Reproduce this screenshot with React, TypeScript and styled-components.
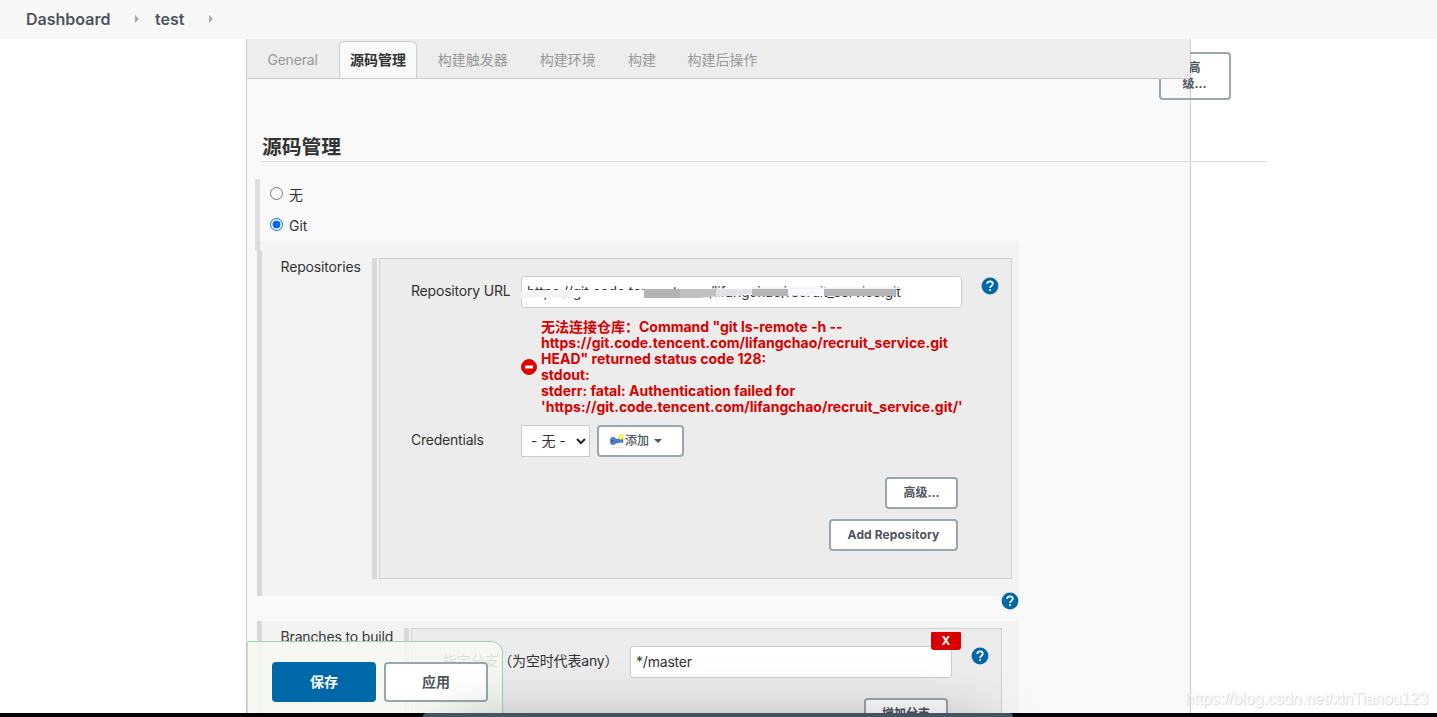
import React from "react";
import styled, { createGlobalStyle } from "styled-components";

const Global = createGlobalStyle`
  * { box-sizing: border-box; }
  body {
    margin: 0;
    background: #fff;
    color: #333;
    font: 14px/16px Inter, "Noto Sans CJK SC", sans-serif;
  }
`;

const Page = styled.div`
  position: relative;
  width: 1437px;
  height: 717px;
  overflow: hidden;
`;

const Text = styled.span<{ $track?: number }>`
  white-space: nowrap;
  letter-spacing: ${(p) => p.$track ?? 0}px;
`;

const Breadcrumbs = styled.header`
  display: flex;
  align-items: center;
  height: 39px;
  padding: 0 0 1px 26px;
  background: #f8f8f8;
  color: #4d545d;
  font-size: 16px;
  font-weight: 600;
`;

const Crumb = styled(Text)<{ $width: number }>`
  width: ${(p) => p.$width}px;
`;

const Arrow = styled.i<{ $gap: number }>`
  width: 0;
  margin-right: ${(p) => p.$gap}px;
  border: 4px solid transparent;
  border-left-color: #aaa;
  border-right-width: 0;
`;

const Panel = styled.main`
  display: flex;
  flex-direction: column;
  width: 945px;
  height: 674px;
  margin-left: 246px;
  background: #f9f9f9;
  border: solid #ccc;
  border-width: 0 1px;
`;

const Tabs = styled.nav`
  position: relative;
  z-index: 2;
  display: flex;
  align-items: flex-end;
  flex: none;
  height: 40px;
  padding-left: 10px;
  background: #ededed;
  border-bottom: 1px solid #ccc;
  color: #999;
`;

const Tab = styled.div<{ $active?: boolean; $width: number }>`
  display: flex;
  align-items: center;
  justify-content: center;
  width: ${(p) => p.$width}px;
  height: 37px;
  border: ${(p) => (p.$active ? "1px solid #ccc" : "0")};
  border-bottom: 0;
  border-radius: 5px 5px 0 0;
  background: ${(p) => (p.$active ? "#f9f9f9" : "transparent")};
  color: ${(p) => (p.$active ? "#333" : "inherit")};
  font-weight: ${(p) => (p.$active ? 700 : 400)};
`;

const TabGap = styled.i<{ $width: number }>`
  width: ${(p) => p.$width}px;
`;

const Heading = styled.h1`
  flex: none;
  width: 1005px;
  height: 83px;
  margin: 0 0 17px 15px;
  padding-top: 56px;
  border-bottom: 1px solid #ddd;
  font-size: 19.800px;
  line-height: 24px;
  font-weight: 700;
`;

const RadioGroup = styled.div`
  flex: none;
  width: 400px;
  height: 72px;
  margin-left: 8px;
  border-left: 5px solid #e0e0e0;
`;

const RadioRow = styled.label`
  display: flex;
  gap: 6px;
  height: 31px;
  padding: 8px 0 0 10px;
`;

const Radio = styled.span<{ $on?: boolean }>`
  width: 13px;
  height: 13px;
  border: 1px solid ${(p) => (p.$on ? "#0068ff" : "#767676")};
  border-radius: 50%;
  background: ${(p) => (p.$on ? "radial-gradient(circle, #0068ff 3.6px, #fff 4.3px)" : "#fff")};
`;

const Block = styled.section<{ $height: number; $lift?: number }>`
  display: flex;
  flex: none;
  width: 762px;
  height: ${(p) => p.$height}px;
  margin: ${(p) => -(p.$lift ?? 0)}px 0 0 10px;
  background: rgba(0, 0, 0, 0.025);
`;

const Bar = styled.i<{ $top: number; $bottom?: number }>`
  flex: none;
  width: 5px;
  margin: ${(p) => p.$top}px 0 ${(p) => p.$bottom ?? 0}px;
  background: #d9d9d9;
`;

const BlockLabel = styled.div<{ $width: number; $top: number }>`
  flex: none;
  width: ${(p) => p.$width}px;
  padding: ${(p) => p.$top}px 0 0 18.500px;
`;

const Card = styled.div<{ $width: number; $top: number; $height: number }>`
  display: flex;
  flex-direction: column;
  flex: none;
  width: ${(p) => p.$width}px;
  height: ${(p) => p.$height}px;
  margin: ${(p) => p.$top}px 0 0 2px;
  background: #ececec;
  border: 1px solid #d0d0d0;
`;

const Field = styled.div<{ $top: number; $left: number }>`
  display: flex;
  align-items: flex-start;
  flex: none;
  margin-top: ${(p) => p.$top}px;
  padding-left: ${(p) => p.$left}px;
`;

const FieldLabel = styled.div<{ $width: number }>`
  flex: none;
  width: ${(p) => p.$width}px;
  padding-top: 7px;
`;

const Input = styled.div<{ $width: number }>`
  position: relative;
  display: flex;
  align-items: center;
  flex: none;
  width: ${(p) => p.$width}px;
  height: 32px;
  padding-left: 5px;
  background: #fff;
  border: 1px solid #ccc;
  border-radius: 3px;
`;

const Smear = styled.svg`
  position: absolute;
  left: -1px;
  top: -1px;
`;

const HelpSvg = styled.svg<{ $left: number; $top: number }>`
  display: block;
  flex: none;
  margin: ${(p) => p.$top}px 0 0 ${(p) => p.$left}px;
`;

const ErrorRow = styled.div`
  display: flex;
  align-items: center;
  flex: none;
  gap: 4px;
  height: 98px;
  margin-top: 10px;
  padding-left: 141px;
  color: #d90000;
  font-weight: 700;
`;

const ErrorLines = styled.div`
  display: flex;
  flex-direction: column;
`;

const Select = styled.div`
  display: flex;
  align-items: center;
  gap: 10px;
  width: 69px;
  height: 32px;
  padding-left: 9px;
  background: #fff;
  border: 1px solid #ccc;
`;

const Button = styled.div<{ $width: number; $height?: number }>`
  display: flex;
  align-items: center;
  justify-content: center;
  flex: none;
  width: ${(p) => p.$width}px;
  height: ${(p) => p.$height ?? 32}px;
  background: #fff;
  border: 2px solid #98a6b0;
  border-radius: 4px;
  color: #4d545d;
  font-size: 12px;
  font-weight: 700;
  text-align: center;
`;

const AddButton = styled(Button)`
  justify-content: flex-start;
  margin-left: 7px;
  padding-left: 10px;
  font-weight: 500;
`;

const Caret = styled.i`
  margin-left: 5px;
  border: 4px solid transparent;
  border-top-color: #4d545d;
  border-bottom-width: 0;
`;

const Actions = styled.div`
  display: flex;
  flex-direction: column;
  align-items: flex-end;
  gap: 10px;
  margin: 20px 53px 0 0;
`;

const HelpRow = styled.div`
  display: flex;
  align-items: flex-start;
  flex: none;
  height: 25px;
`;

const FloatingButton = styled(Button)`
  position: absolute;
  z-index: 1;
  left: 1159px;
  top: 52px;
  padding-right: 1px;
  background: transparent;
`;

const PanelEdge = styled.div`
  position: absolute;
  left: 1191px;
  top: 54px;
  width: 38px;
  height: 44px;
  background: #fff;
`;

const DeleteButton = styled.div`
  position: absolute;
  right: -10px;
  top: -15px;
  width: 30px;
  height: 18px;
  background: #d90000;
  border-radius: 1px 1px 3px 3px;
  color: #fff;
  font-size: 12px;
  line-height: 18px;
  font-weight: 700;
  text-align: center;
`;

const SaveBar = styled.footer`
  position: absolute;
  z-index: 3;
  left: 247px;
  top: 641px;
  display: flex;
  gap: 8px;
  width: 256px;
  height: 90px;
  padding: 20px 0 0 24px;
  background: rgba(245, 249, 240, 0.87);
  border: 1px solid #9fd0b8;
  border-left-color: #c4dccf;
  border-radius: 0 12px 0 0;
`;

const SaveButton = styled(Button)<{ $primary?: boolean }>`
  font-size: 14px;
  background: ${(p) => (p.$primary ? "#0068a8" : "#fff")};
  border-color: ${(p) => (p.$primary ? "#0068a8" : "#98a6b0")};
  color: ${(p) => (p.$primary ? "#fff" : "#4d545d")};
`;

const DockShade = styled.div`
  position: absolute;
  z-index: 4;
  left: 0;
  top: 600px;
  width: 1437px;
  height: 113px;
  overflow: hidden;
  &::after {
    content: "";
    position: absolute;
    left: 455px;
    top: 131px;
    width: 526px;
    height: 60px;
    box-shadow: 0 0 64px rgba(0, 0, 0, 0.38);
  }
`;

const Screen = styled.div`
  position: absolute;
  z-index: 5;
  left: 0;
  top: 713px;
  width: 1437px;
  height: 4px;
  background: #020307;
`;

const Dock = styled.div`
  width: 590px;
  height: 4px;
  margin-left: 423px;
  background: #455463;
  border-radius: 4px 4px 0 0;
`;

const Watermark = styled.div`
  position: absolute;
  z-index: 6;
  left: 1185px;
  top: 690px;
  color: #fff;
  font: 16px/18px "Liberation Sans", sans-serif;
  white-space: nowrap;
  text-shadow: 1px 1px 1px #d4d4d4, 0 0 1px #ddd;
`;

const Help = ({ left = 0, top = 1 }: { left?: number; top?: number }) => (
  <HelpSvg $left={left} $top={top} width="18" height="18" viewBox="0 0 18 18">
    <circle cx="9" cy="9" r="8.4" fill="#0068a8" />
    <path d="M6.2 7C6.2 5.2 7.4 4.3 9 4.3s2.8 1 2.8 2.500C11.800 8.800 9.100 8.700 9.100 11" fill="none" stroke="#fff" strokeWidth="1.7" />
    <rect x="8.200" y="12.200" width="1.800" height="1.800" fill="#fff" />
  </HelpSvg>
);

const tabs = [
  { name: "General", width: 71, track: -0.2 },
  { name: "源码管理", width: 78, active: true, gap: 11 },
  { name: "构建触发器", width: 111.5 },
  { name: "构建环境", width: 78.5 },
  { name: "构建", width: 70 },
  { name: "构建后操作", width: 91 },
];

const errors = [
  '无法连接仓库：Command "git ls-remote -h --',
  "https://git.code.tencent.com/lifangchao/recruit_service.git",
  'HEAD" returned status code 128:',
  "stdout:",
  "stderr: fatal: Authentication failed for",
  "'https://git.code.tencent.com/lifangchao/recruit_service.git/'",
];

export default function App() {
  return (
    <Page>
      <Global />
      <Breadcrumbs>
        <Crumb $width={109}>Dashboard</Crumb>
        <Arrow $gap={16} />
        <Crumb $width={54}>test</Crumb>
        <Arrow $gap={0} />
      </Breadcrumbs>
      <Panel>
        <Tabs>
          {tabs.map((t) => (
            <React.Fragment key={t.name}>
              {t.gap && <TabGap $width={t.gap} />}
              <Tab $width={t.width} $active={t.active}><Text $track={t.track}>{t.name}</Text></Tab>
            </React.Fragment>
          ))}
        </Tabs>
        <Heading>源码管理</Heading>
        <RadioGroup>
          <RadioRow><Radio /><Text>无</Text></RadioRow>
          <RadioRow><Radio $on /><Text>Git</Text></RadioRow>
        </RadioGroup>
        <Block $height={355} $lift={10}>
          <Bar $top={10} />
          <BlockLabel $width={110} $top={18}><Text $track={-0.15}>Repositories</Text></BlockLabel>
          <Bar $top={17} $bottom={17} />
          <Card $width={633} $top={17} $height={321}>
            <Field $top={17} $left={31}>
              <FieldLabel $width={110}><Text $track={-0.19}>Repository URL</Text></FieldLabel>
              <Input $width={441}>
                <Text $track={-0.19}>https://git.code.tencent.com/lifangchao/recruit_service.git</Text>
                <Smear width="390" height="32" viewBox="0 0 390 32">
                  <path d="M2 14L60 14L124 14L180 12.500L240 12L374 12L374 20L300 20L231 19L180 21L124 22.500L60 21L2 22Z" fill="#fff" />
                  <path d="M0 16L16 14L51 15V22L16 21L0 23Z" fill="#f3f4f6" />
                  <path d="M123 13H159V22H123Z" fill="#b3b3b3" />
                  <path d="M159 13H195V20L178 22H159Z" fill="#c0c0c1" />
                  <path d="M195 13H231V18L195 21Z" fill="#e0e2e5" />
                  <path d="M231 12.500H267V20H231Z" fill="#b4b4b5" />
                  <path d="M267 12.500H303V19H267Z" fill="#f7f9fc" />
                  <path d="M303 13H374V20H303Z" fill="#b3b4b5" />
                  <path d="M231 11.500H384L386 13H231Z" fill="#f0f2f3" />
                </Smear>
              </Input>
              <Help left={19} />
            </Field>
            <ErrorRow>
              <svg width="16" height="16" viewBox="0 0 16 16">
                <circle cx="8" cy="8" r="7.500" fill="#e60000" stroke="#b81414" />
                <rect x="4" y="6.500" width="8" height="3" fill="#fff" />
              </svg>
              <ErrorLines>
                {errors.map((line) => <Text key={line}>{line}</Text>)}
              </ErrorLines>
            </ErrorRow>
            <Field $top={9} $left={31}>
              <FieldLabel $width={110}><Text $track={-0.22}>Credentials</Text></FieldLabel>
              <Select>
                <Text>- 无 -</Text>
                <svg width="10" height="7" viewBox="0 0 10 7"><path d="M1 1L5 5L9 1" fill="none" stroke="#222" strokeWidth="2" /></svg>
              </Select>
              <AddButton $width={87}>
                <svg width="16" height="16" viewBox="0 0 16 16">
                  <ellipse cx="8" cy="14.500" rx="6" ry="0.700" fill="#e4e4e4" />
                  <path d="M1.500 5.500C3 3.500 6 4.300 7 6H14V9.500H12L11 9L10 10H7C6 12 3 12.200 1.500 10.500Z" fill="#4a7fc6" stroke="#3d6eb4" strokeWidth=".5" />
                  <circle cx="3.200" cy="8" r="0.900" fill="#284b80" />
                  <circle cx="12" cy="4" r="1.800" fill="#fff" stroke="#f6f000" strokeWidth="1.600" />
                </svg>
                添加
                <Caret />
              </AddButton>
            </Field>
            <Actions>
              <Button $width={73}>高级...</Button>
              <Button $width={129}><Text $track={0.1}>Add Repository</Text></Button>
            </Actions>
          </Card>
        </Block>
        <HelpRow><Help left={754} top={-4} /></HelpRow>
        <Block $height={92}>
          <Bar $top={0} />
          <BlockLabel $width={142} $top={8}><Text $track={-0.15}>Branches to build</Text></BlockLabel>
          <Bar $top={7} />
          <Card $width={591} $top={7} $height={100}>
            <Field $top={17} $left={31}>
              <FieldLabel $width={187}><Text $track={-0.18}>指定分支（为空时代表any）</Text></FieldLabel>
              <Input $width={322}>
                <Text $track={-0.2}>*/master</Text>
                <DeleteButton>X</DeleteButton>
              </Input>
              <Help left={19} />
            </Field>
            <Actions>
              <Button $width={84}>增加分支</Button>
            </Actions>
          </Card>
        </Block>
      </Panel>
      <PanelEdge />
      <FloatingButton $width={72} $height={48}>高<br />级...</FloatingButton>
      <SaveBar>
        <SaveButton $width={104} $height={40} $primary>保存</SaveButton>
        <SaveButton $width={104} $height={40}>应用</SaveButton>
      </SaveBar>
      <DockShade />
      <Screen><Dock /></Screen>
      <Watermark>https://blog.csdn.net/xinTianou123</Watermark>
    </Page>
  );
}
